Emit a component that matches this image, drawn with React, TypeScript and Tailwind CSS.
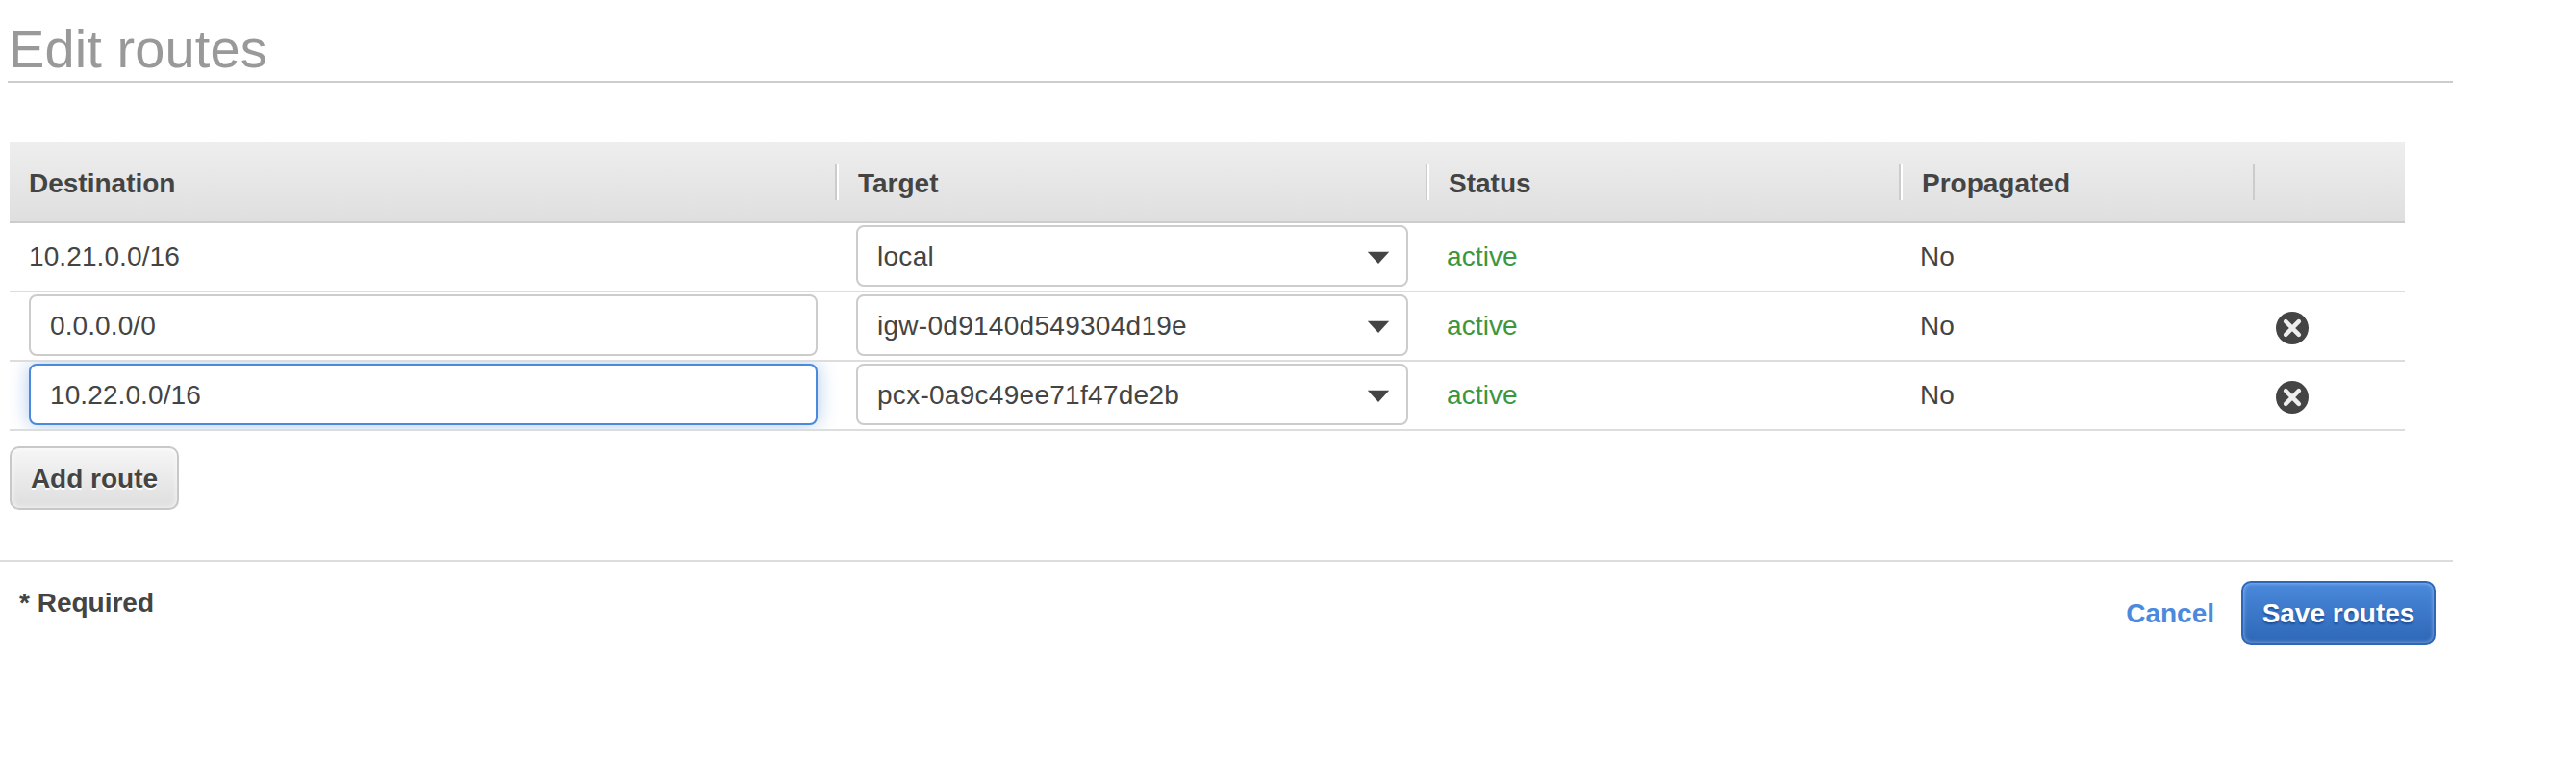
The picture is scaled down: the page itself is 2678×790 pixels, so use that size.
import React from "react";

type Route = {
  destination: string;
  target: string;
  state: "fixed" | "editable" | "focused";
};

const routes: Route[] = [
  { destination: "10.21.0.0/16", target: "local", state: "fixed" },
  { destination: "0.0.0.0/0", target: "igw-0d9140d549304d19e", state: "editable" },
  { destination: "10.22.0.0/16", target: "pcx-0a9c49ee71f47de2b", state: "focused" },
];

const columns = "grid grid-cols-[860px_614px_492px_368px_156px]";

function HeaderCell({ label, first, last }: { label: string; first?: boolean; last?: boolean }) {
  return (
    <div className="flex h-[82px] items-start pt-[22px]">
      {!first && !last && <span className="h-[38px] w-[2px] bg-white" />}
      <span className="grow pl-5 pt-[5px]">{label}</span>
      {!last && <span className="h-[38px] w-[2px] bg-[#ccc]" />}
    </div>
  );
}

function TargetSelect({ value }: { value: string }) {
  return (
    <div className="flex h-16 w-[574px] items-center justify-between rounded-lg border-2 border-[#ccc] bg-white pl-5 pr-[17px]">
      <span className="pt-[2px] tracking-[0.28px]">{value}</span>
      <svg width="24" height="14" viewBox="0 0 24 14" className="mt-1">
        <path d="M0.8 0.8h22.4L12 13z" fill="#444" />
      </svg>
    </div>
  );
}

function RemoveIcon() {
  return (
    <svg width="36" height="36" viewBox="0 0 36 36">
      <circle cx="18" cy="18" r="17" fill="#444" />
      <path
        d="M11.2 11.2l13.6 13.6M24.8 11.2L11.2 24.8"
        stroke="#eee"
        strokeWidth="4.6"
        strokeLinecap="round"
      />
    </svg>
  );
}

function RouteRow({ route }: { route: Route }) {
  return (
    <div className={`${columns} h-[72px] overflow-hidden border-b-2 border-[#ddd] leading-8`}>
      <div className="pl-5 pt-[2px]">
        {route.state === "fixed" ? (
          <div className="pt-[17px] tracking-[0.1px]">{route.destination}</div>
        ) : (
          <input
            readOnly
            value={route.destination}
            className={
              route.state === "focused"
                ? "block h-16 w-[820px] rounded-lg border-2 border-[#4a89dc] bg-white px-5 pt-[2px] tracking-[0.1px] shadow-[0_0_20px_rgba(74,137,220,0.45)] outline-none"
                : "block h-16 w-[820px] rounded-lg border-2 border-[#ccc] bg-white px-5 pt-[2px] tracking-[0.1px] outline-none"
            }
          />
        )}
      </div>
      <div className="pl-5 pt-[2px]">
        <TargetSelect value={route.target} />
      </div>
      <div className="pl-5 pt-[19px] tracking-[0.1px] text-[#3c963c]">active</div>
      <div className="pl-5 pt-[19px]">No</div>
      <div className="pl-[21px] pt-[19px]">{route.state !== "fixed" && <RemoveIcon />}</div>
    </div>
  );
}

export default function App() {
  return (
    <div className="h-[790px] w-[2678px] bg-white font-['Liberation_Sans',Arial,sans-serif] text-[28px] leading-8 text-[#444]">
      <div className="w-[2550px]">
        <h1 className="ml-2 h-[86px] border-b-2 border-[#ccc] pl-px pt-[19px] text-[56px] leading-[64px] tracking-[0.1px] text-[#999]">
          Edit routes
        </h1>

        <div className="ml-[10px] mt-[62px] w-[2490px]">
          <div
            className={`${columns} h-[84px] border-b-2 border-[#ccc] bg-linear-to-b from-[#eee] to-[#dfdfdf] font-bold`}
          >
            <HeaderCell label="Destination" first />
            <HeaderCell label="Target" />
            <HeaderCell label="Status" />
            <HeaderCell label="Propagated" />
            <HeaderCell label="" last />
          </div>
          {routes.map((route) => (
            <RouteRow key={route.destination} route={route} />
          ))}
        </div>

        <button className="ml-[10px] mt-4 block h-[66px] w-[176px] rounded-[10px] border-2 border-[#c8c8c8] bg-linear-to-b from-[#f6f6f6] to-[#dedede] pt-[2px] font-bold shadow-[inset_0_0_6px_rgba(255,255,255,0.8)] [text-shadow:0_2px_0_#fff]">
          Add route
        </button>

        <div className="mt-[52px] flex justify-between border-t-2 border-[#ddd] font-bold">
          <div className="pl-5 pt-[27px]">* Required</div>
          <div className="flex items-center gap-7 pr-[18px] pt-5">
            <a className="pt-[2px] text-[#4a89dc]">Cancel</a>
            <button className="h-[66px] w-[202px] rounded-[10px] border-2 border-[#2e67b7] bg-linear-to-b from-[#4a89dc] to-[#2e67b7] pt-[2px] text-white shadow-[inset_0_0_4px_rgba(255,255,255,0.5)] [text-shadow:0_2px_2px_#1f4f96]">
              Save routes
            </button>
          </div>
        </div>
      </div>
    </div>
  );
}
